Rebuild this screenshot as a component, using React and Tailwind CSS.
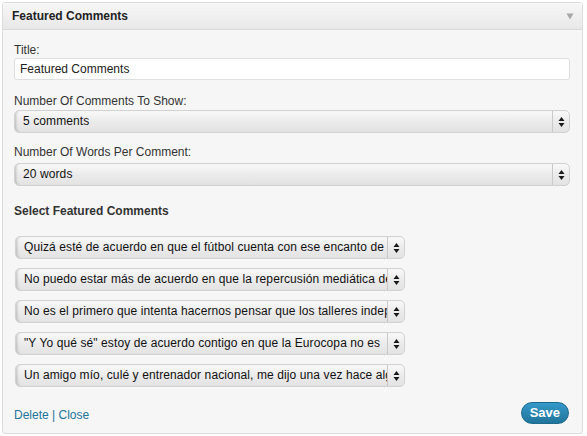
import React from 'react';

const font = { fontFamily: '"Liberation Sans", Arial, sans-serif' };

const comments = [
  'Quizá esté de acuerdo en que el fútbol cuenta con ese encanto de',
  'No puedo estar más de acuerdo en que la repercusión mediática de',
  'No es el primero que intenta hacernos pensar que los talleres independientes',
  '"Y Yo qué sé" estoy de acuerdo contigo en que la Eurocopa no es',
  'Un amigo mío, culé y entrenador nacional, me dijo una vez hace algo',
];

function Arrows() {
  return (
    <svg width="7" height="12" viewBox="0 0 7 12" className="block">
      <path d="M3.5 1 L6.5 5 L0.5 5 Z" fill="#1a1a1a" />
      <path d="M3.5 11 L6.5 7 L0.5 7 Z" fill="#1a1a1a" />
    </svg>
  );
}

function FakeSelect({ value, className = '' }) {
  return (
    <div
      className={`flex h-[23px] items-stretch rounded-[5px] border border-[#d2d2d2] bg-gradient-to-b from-[#f9f9f9] via-[#ebebeb] to-[#e3e3e3] shadow-[inset_3px_0_3px_-2px_rgba(0,0,0,0.22)] ${className}`}
    >
      <div className="flex-1 overflow-hidden whitespace-nowrap pl-[8px] text-[12px] leading-[21px] tracking-[0.1px] text-[#111]">
        {value}
      </div>
      <div className="flex w-[17px] shrink-0 items-center justify-center border-l border-[#c9c9c9]">
        <Arrows />
      </div>
    </div>
  );
}

export default function App() {
  return (
    <div className="h-[436px] w-[587px] bg-white pl-[2px] pt-[2px]" style={font}>
      <div className="w-[581px] rounded-[3px] border border-[#dcdcdc] bg-[#f6f6f6]">
        <div className="flex h-[27px] items-center justify-between border-b border-[#d8d8d8] bg-gradient-to-b from-[#f7f7f7] to-[#e8e8e8] pl-[9px] pr-[8px]">
          <span className="text-[12px] font-bold text-[#222]">Featured Comments</span>
          <svg width="8" height="7" viewBox="0 0 8 7">
            <path d="M0.5 0.5 L7.5 0.5 L4 6.5 Z" fill="#a8a8a8" />
          </svg>
        </div>

        <div className="pl-[11px] pr-[12px] pt-[13px]">
          <div className="text-[12px] leading-[15px] text-[#333]">Title:</div>
          <div className="h-[22px] rounded-[3px] border border-[#dfdfdf] bg-white pl-[5px] text-[12px] leading-[20px] text-[#222]">
            Featured Comments
          </div>

          <div className="mt-[14px] text-[12px] leading-[15px] text-[#333]">Number Of Comments To Show:</div>
          <FakeSelect value="5 comments" className="mt-[1px]" />

          <div className="mt-[12px] text-[12px] leading-[15px] text-[#333]">Number Of Words Per Comment:</div>
          <FakeSelect value="20 words" className="mt-[3px]" />

          <div className="mt-[18px] text-[12px] font-bold leading-[15px] text-[#333]">Select Featured Comments</div>

          <div className="mt-[17px] flex w-[391px] flex-col gap-[9px] pl-[1px]">
            {comments.map((c) => (
              <FakeSelect key={c} value={c} />
            ))}
          </div>

          <div className="mt-[15px] flex items-center justify-between pb-[9px]">
            <div className="pt-[3px] text-[12px] text-[#21759b]">
              Delete <span>|</span> Close
            </div>
            <button className="mr-[1px] h-[22px] rounded-full border border-[#1e6a8d] bg-gradient-to-b from-[#3499c9] to-[#21759b] px-[8px] text-[13px] font-bold text-white">
              Save
            </button>
          </div>
        </div>
      </div>
    </div>
  );
}
